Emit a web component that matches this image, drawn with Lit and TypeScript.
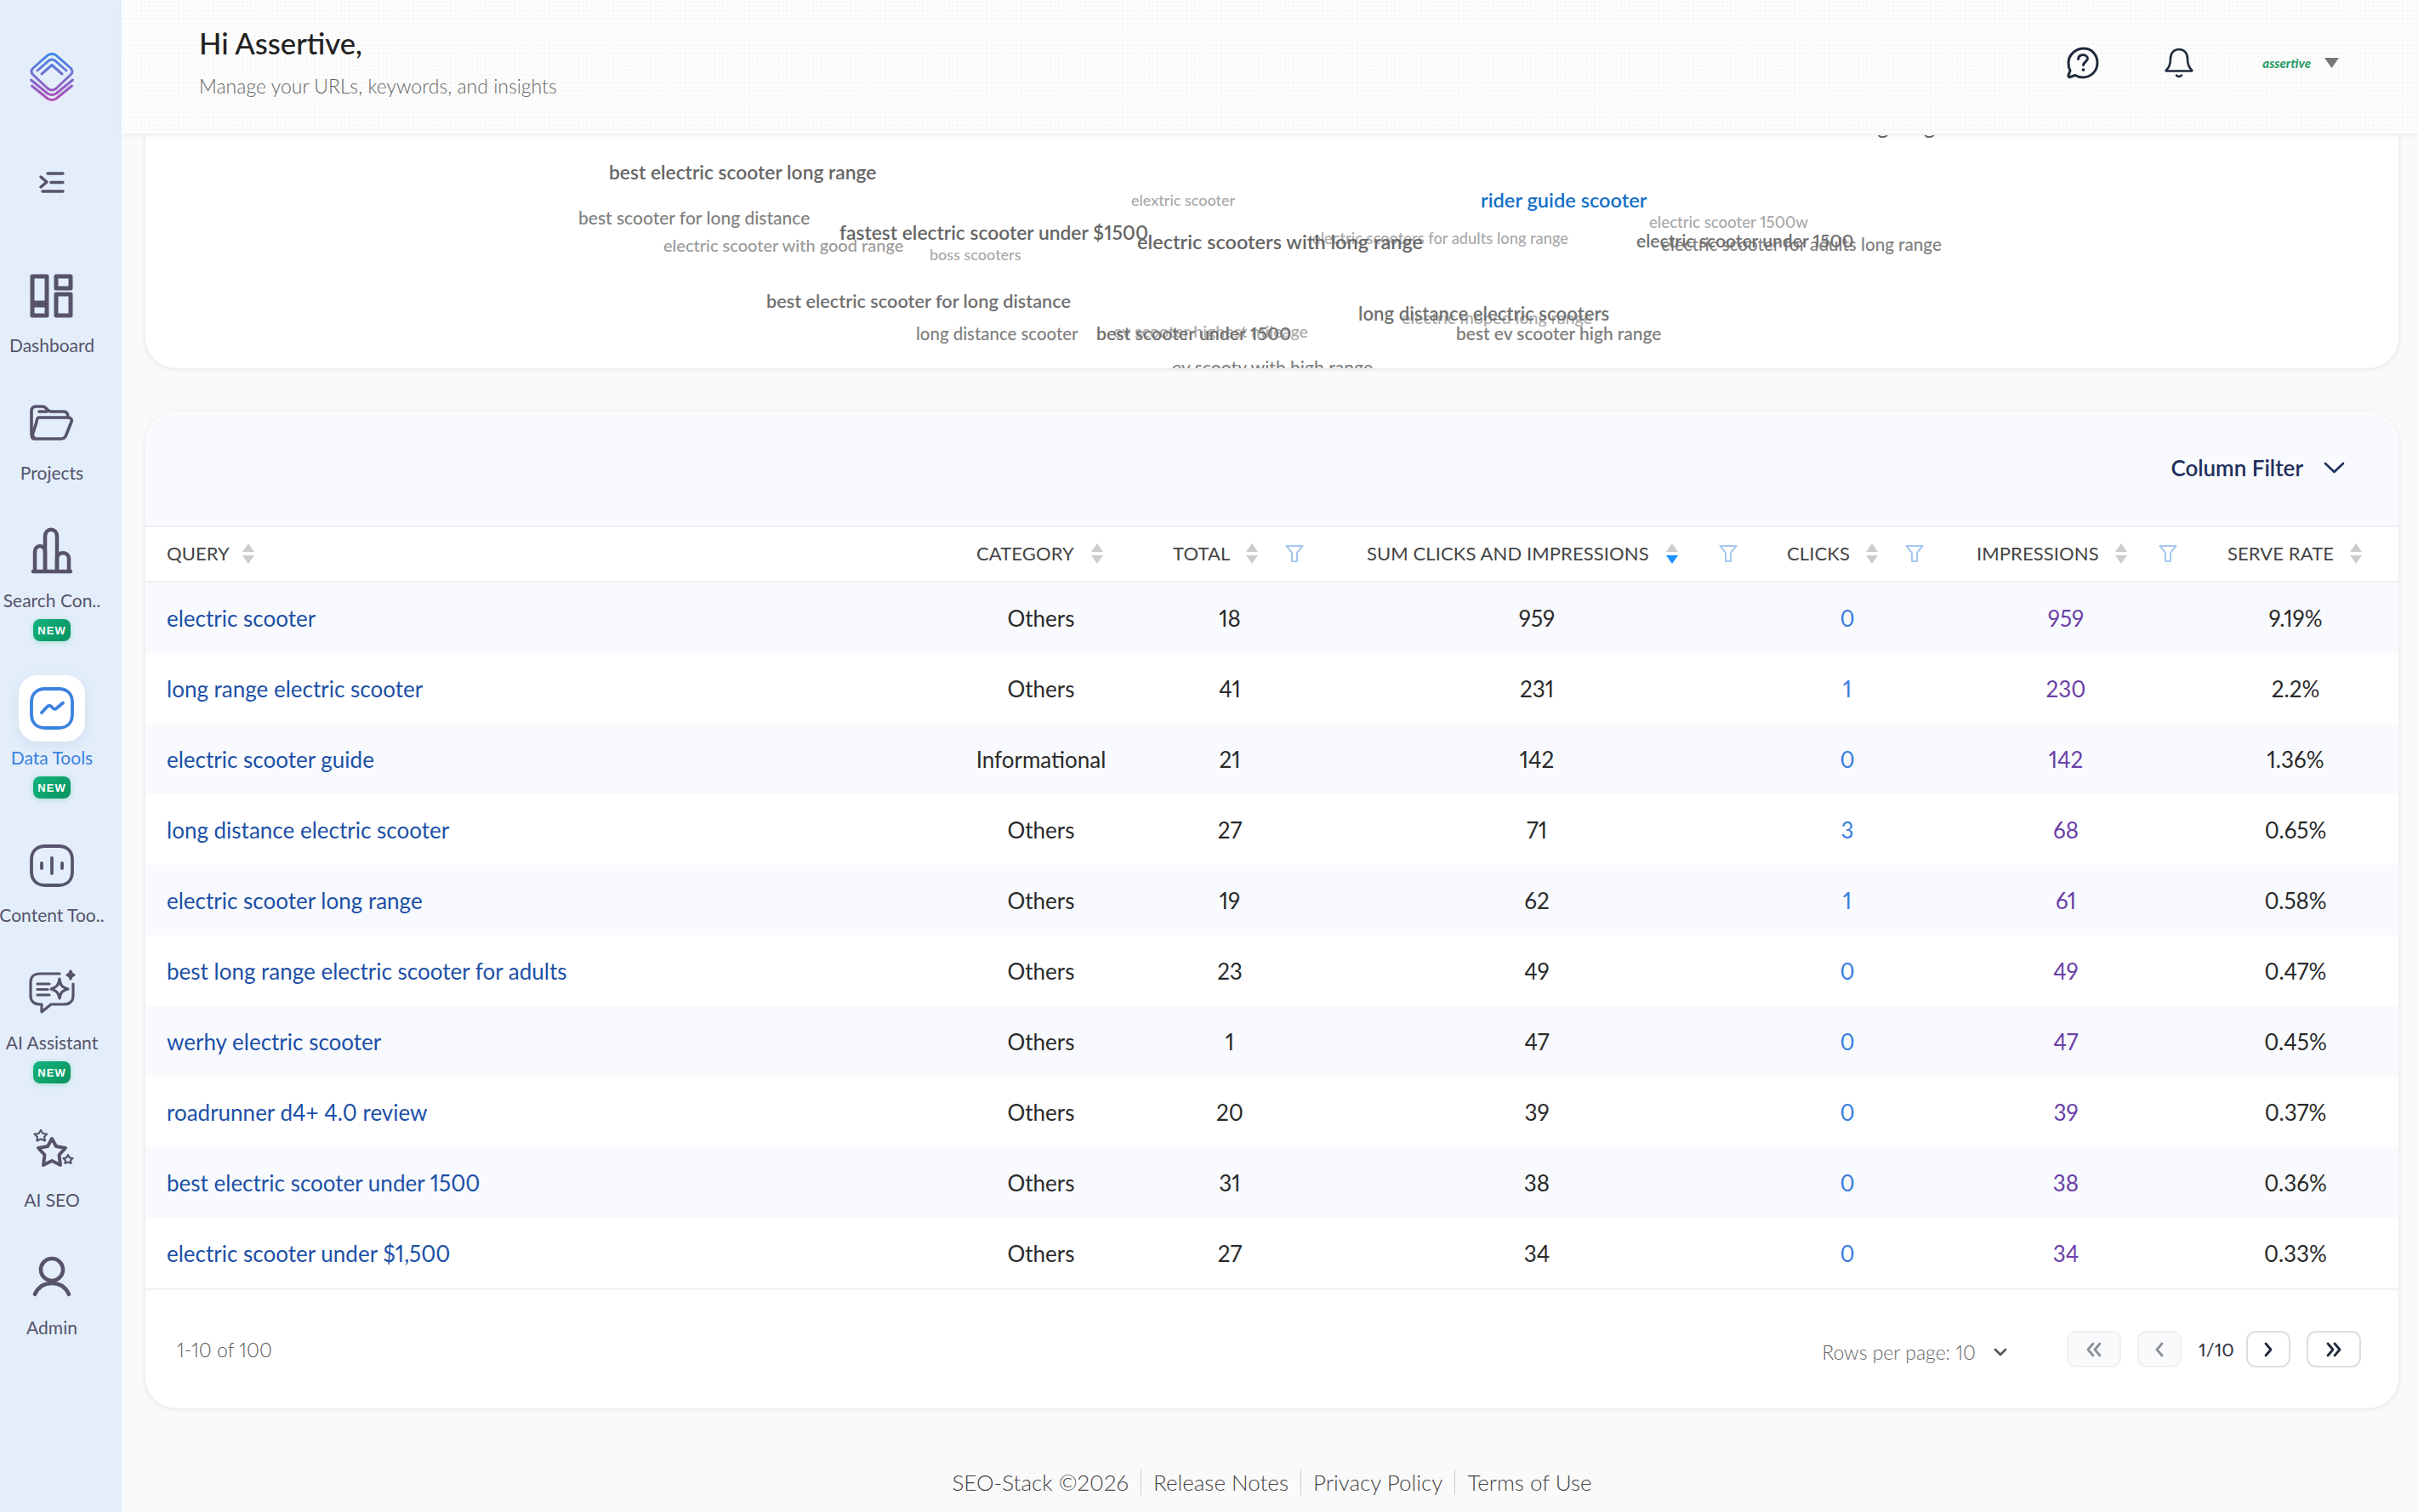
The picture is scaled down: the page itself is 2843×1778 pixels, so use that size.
import { LitElement, html, css, svg } from 'lit'
import { customElement } from 'lit/decorators.js'

const ink = '#56536b'

const navIcons: Record<string, unknown> = {
  dashboard: svg`<g fill="none" stroke=${ink} stroke-width="5" stroke-linejoin="round">
    <rect x="5" y="5" width="17" height="31"/><rect x="33" y="5" width="17" height="14"/>
    <rect x="5" y="39" width="17" height="12"/><rect x="33" y="26" width="17" height="25"/></g>`,
  projects: svg`<g fill="none" stroke=${ink} stroke-width="3.6" stroke-linecap="round" stroke-linejoin="round">
    <path d="M7 44 C5 44 4 43 4 40 V14 C4 10 6 8 9 8 H17 C20 8 21 10 23 12 C24 13 25 14 27 14 H42 C46 14 47 17 47 21"/>
    <path d="M12 21 H47 C50 21 52 23 51 26 L45 41 C44 44 42 46 39 46 H7 C5 46 4 44 5 42 L10 26 C10.500 23 11 21 12 21 Z"/>
    <path d="M13 14 H22"/></g>`,
  search: svg`<g fill="none" stroke=${ink} stroke-width="4.500" stroke-linejoin="round">
    <path d="M8 52 V29 C8 20 20 20 20 29 V52"/><path d="M20 52 V11 C20 0 34 0 34 11 V52"/>
    <path d="M34 52 V37 C34 28 48 28 48 37 V52"/><path d="M6 52 H50" stroke-linecap="round"/></g>`,
  data: svg`<g fill="none" stroke="#3b82e0" stroke-width="3.800" stroke-linecap="round" stroke-linejoin="round">
    <path d="M20 5 H36 C46 5 52 11 52 21 V35 C52 45 46 51 36 51 H20 C10 51 4 45 4 35 V21 C4 11 10 5 20 5 Z"/>
    <path d="M16 33 L22.500 26 C24 24.500 26 24.500 27.500 26 L29 27.500 C30.500 29 32.500 29 34 27.500 L41 21.500"/></g>`,
  content: svg`<g fill="none" stroke=${ink} stroke-width="3.800" stroke-linecap="round" stroke-linejoin="round">
    <path d="M20 5 H36 C46 5 52 11 52 21 V35 C52 45 46 51 36 51 H20 C10 51 4 45 4 35 V21 C4 11 10 5 20 5 Z"/>
    <path d="M16 25 V31"/><path d="M28 19 V37"/><path d="M40 25 V31"/></g>`,
  assistant: svg`<g fill="none" stroke=${ink} stroke-width="3.200" stroke-linecap="round" stroke-linejoin="round">
    <path d="M37 5 H14 C7 5 3 9 3 15 V31 C3 37 7 41 14 41 H16 V50 L27 41 H42 C49 41 53 37 53 31 V17"/>
    <path d="M11 17 H25"/><path d="M11 23.500 H23"/><path d="M11 30 H25"/>
    <path d="M37 11 C38 19 40 21 47 23 C40 25 38 27 37 34 C36 27 33 25 27 23 C33 21 36 19 37 11 Z"/>
    <path d="M50 2 C50.500 5 51.500 6 54 6.500 C51.500 7 50.500 8 50 11 C49.500 8 48.500 7 46 6.500 C48.500 6 49.500 5 50 2 Z" fill=${ink}/></g>`,
  seo: svg`<g fill="none" stroke=${ink} stroke-linecap="round" stroke-linejoin="round">
    <path stroke-width="4" d="M28 14 L33 23 L44 25 L36.500 33 L38 45 L28 40 L18 45 L19.500 33 L12 25 L23 23 Z"/>
    <path stroke-width="2.200" d="M15 4 L17.500 8 L22 8.500 L19 12 L20 16.500 L15 14.500 L10.500 16.500 L11 12 L7.500 8.500 L12.500 8 Z"/>
    <path stroke-width="2.200" d="M47 33 L49 36.500 L52.500 37 L50 39.500 L50.500 43 L47 41.500 L43.500 43 L44 39.500 L41.500 37 L45 36.500 Z"/></g>`,
  admin: svg`<g fill="none" stroke=${ink} stroke-width="4.600" stroke-linecap="round">
    <circle cx="28" cy="18" r="13"/><path d="M8 47 C12 38 19 34 28 34 C37 34 44 38 48 47"/></g>`,
}

const nav = [
  { key: 'dashboard', label: 'Dashboard' },
  { key: 'projects', label: 'Projects' },
  { key: 'search', label: 'Search Con..', isNew: true },
  { key: 'data', label: 'Data Tools', isNew: true, active: true },
  { key: 'content', label: 'Content Too..' },
  { key: 'assistant', label: 'AI Assistant', isNew: true },
  { key: 'seo', label: 'AI SEO' },
  { key: 'admin', label: 'Admin' },
]

const dark = '#666'
const mid = '#808080'
const pale = '#a8a8a8'

// free canvas: x/y are the word's left edge and vertical centre inside the card
const words = [
  { t: 'long range scooter', x: 2002, y: -11, s: 25, c: dark, w: 500 },
  { t: 'best electric scooter long range', x: 545, y: 44, s: 22.8, c: dark, w: 600 },
  { t: 'best scooter for long distance', x: 509, y: 97, s: 21, c: mid, w: 500 },
  { t: 'elextric scooter', x: 1159, y: 77, s: 18, c: pale, w: 500 },
  { t: 'rider guide scooter', x: 1570, y: 76, s: 23.6, c: '#1470c8', w: 600 },
  { t: 'electric scooter 1500w', x: 1768, y: 102, s: 18.6, c: pale, w: 500 },
  { t: 'electric scooter with good range', x: 609, y: 129, s: 20, c: '#999', w: 500 },
  { t: 'fastest electric scooter under $1500', x: 816, y: 115, s: 22.8, c: dark, w: 600 },
  { t: 'boss scooters', x: 922, y: 141, s: 18, c: pale, w: 500 },
  { t: 'electric scooters for adults long range', x: 1372, y: 122, s: 18.3, c: pale, w: 500 },
  { t: 'electric scooters with long range', x: 1166, y: 125, s: 23.5, c: dark, w: 600 },
  { t: 'electric scooter for adults long range', x: 1782, y: 128, s: 20.6, c: mid, w: 500 },
  { t: 'electric scooter under 1500', x: 1753, y: 124, s: 21.1, c: '#707070', w: 600 },
  { t: 'best electric scooter for long distance', x: 730, y: 195, s: 21.7, c: '#707070', w: 600 },
  { t: 'electric moped long range', x: 1477, y: 215, s: 19.7, c: pale, w: 500 },
  { t: 'long distance electric scooters', x: 1426, y: 210, s: 22.2, c: '#707070', w: 600 },
  { t: 'long distance scooter', x: 906, y: 233, s: 20.4, c: mid, w: 500 },
  { t: 'ev scooter highest mileage', x: 1138, y: 231, s: 19.7, c: pale, w: 500 },
  { t: 'best scooter under 1500', x: 1118, y: 234, s: 21.3, c: '#707070', w: 600 },
  { t: 'best ev scooter high range', x: 1541, y: 233, s: 20.9, c: mid, w: 600 },
  { t: 'ev scooty with high range', x: 1207, y: 273, s: 21.1, c: mid, w: 500 },
]

const columns = [
  { label: 'QUERY', cls: 'c-query' },
  { label: 'CATEGORY', cls: 'c-category' },
  { label: 'TOTAL', cls: 'c-total', filter: true },
  { label: 'SUM CLICKS AND IMPRESSIONS', cls: 'c-sum', filter: true, sorted: true },
  { label: 'CLICKS', cls: 'c-clicks', filter: true },
  { label: 'IMPRESSIONS', cls: 'c-impressions', filter: true },
  { label: 'SERVE RATE', cls: 'c-rate' },
]

const rows = [
  ['electric scooter', 'Others', 18, 959, 0, 959, '9.19%'],
  ['long range electric scooter', 'Others', 41, 231, 1, 230, '2.2%'],
  ['electric scooter guide', 'Informational', 21, 142, 0, 142, '1.36%'],
  ['long distance electric scooter', 'Others', 27, 71, 3, 68, '0.65%'],
  ['electric scooter long range', 'Others', 19, 62, 1, 61, '0.58%'],
  ['best long range electric scooter for adults', 'Others', 23, 49, 0, 49, '0.47%'],
  ['werhy electric scooter', 'Others', 1, 47, 0, 47, '0.45%'],
  ['roadrunner d4+ 4.0 review', 'Others', 20, 39, 0, 39, '0.37%'],
  ['best electric scooter under 1500', 'Others', 31, 38, 0, 38, '0.36%'],
  ['electric scooter under $1,500', 'Others', 27, 34, 0, 34, '0.33%'],
]

const chevron = (d: string, color: string) => html`<svg class="pg-icon" viewBox="0 0 24 24" fill="none" stroke=${color} stroke-width="2.800" stroke-linecap="round" stroke-linejoin="round"><path d=${d}/></svg>`

@customElement('app-root')
export class AppRoot extends LitElement {
  static styles = css`
    :host {
      display: flex;
      min-height: 100vh;
      background: #fafafa;
      font-family: 'Lato', 'Noto Sans', sans-serif;
      font-variant-numeric: proportional-nums;
      color: #222;
      overflow: hidden;
    }

    .sidebar {
      width: 143px;
      flex: none;
      background: #e3eefa;
      display: flex;
      flex-direction: column;
      align-items: center;
      padding: 62px 21px 0 0;
      box-sizing: border-box;
    }
    .logo { width: 52px; height: 58px; display: block; }
    .menu { width: 30px; height: 25px; margin: 82px 0 82px; display: block; }
    .nav { display: flex; flex-direction: column; gap: 37px; width: 100%; align-items: center; }
    .nav-item { display: flex; flex-direction: column; align-items: center; width: 100%; }
    .nav-icon { width: 78px; height: 78px; border-radius: 22px; display: flex; align-items: center; justify-content: center; }
    .nav-icon svg { width: 56px; height: 56px; display: block; }
    .nav-item.active .nav-icon { background: #fff; box-shadow: 0 4px 14px rgba(120, 150, 190, 0.18); }
    .nav-label { margin: 4px 0 1px; font-size: 21px; line-height: 30px; color: #56536b; white-space: nowrap; }
    .nav-item.active .nav-label { color: #3b82e0; }
    .badge {
      margin: 6px 0 3px;
      width: 44px;
      height: 26px;
      border-radius: 8px;
      background: linear-gradient(135deg, #14b57c, #0a9160);
      box-shadow: 0 1px 6px rgba(20, 180, 120, 0.3);
      color: #fff;
      font-size: 13px;
      font-weight: 900;
      letter-spacing: 1px;
      display: flex;
      align-items: center;
      justify-content: center;
      font-family: 'Liberation Sans', sans-serif;
    }

    .main { flex: 1; min-width: 0; display: flex; flex-direction: column; }

    .topbar {
      height: 159px;
      box-sizing: border-box;
      padding: 0 93px 0 91px;
      display: flex;
      align-items: center;
      justify-content: space-between;
      background-color: #fdfdfd;
      background-image: radial-gradient(#f6f6f6 1px, transparent 1.2px);
      background-size: 5px 5px;
      border-bottom: 1px solid #ececec;
      box-shadow: 0 2px 6px rgba(0, 0, 0, 0.03);
      position: relative;
      z-index: 2;
    }
    .greet { margin-top: -12px; }
    .hello { font-size: 34.6px; line-height: 42px; font-weight: 500; color: #222; margin: 0 0 13px; }
    .sub { font-size: 23px; line-height: 32px; font-weight: 300; color: #666; margin: 0; }
    .top-actions { display: flex; align-items: center; margin-top: -11px; }
    .top-actions svg { display: block; }
    .help { width: 38px; height: 38px; margin-right: 77px; }
    .bell { width: 34px; height: 36px; margin-right: 81px; }
    .user { font-size: 15px; font-weight: 900; font-style: italic; color: #2e9e6b; }
    .caret { width: 17px; height: 12px; margin-left: 16px; }

    .content { padding: 0 23px 0 28px; display: flex; flex-direction: column; }
    .card { background: #fff; box-shadow: 0 1px 6px rgba(0, 0, 0, 0.09); }

    .cloud {
      height: 274px;
      position: relative;
      overflow: hidden;
      border-radius: 0 0 36px 36px;
    }
    .word { position: absolute; transform: translateY(-50%); white-space: nowrap; line-height: 1.2; }

    .table-card { margin-top: 51px; border-radius: 36px; overflow: hidden; }
    .toolbar {
      height: 134px;
      background: #f8fafd;
      display: flex;
      align-items: center;
      justify-content: flex-end;
      padding: 0 63px 2px 0;
      gap: 24px;
      box-sizing: border-box;
      color: #1f2f5c;
      font-size: 26px;
      font-weight: 600;
    }
    .toolbar svg { width: 25px; height: 14px; display: block; }

    table { width: 100%; border-collapse: separate; border-spacing: 0; table-layout: fixed; }
    th {
      box-sizing: border-box;
      height: 67px;
      padding: 0;
      border-top: 2px solid #eef0f3;
      border-bottom: 2px solid #eef0f3;
      background: #fff;
    }
    .th-in { display: flex; align-items: center; font-size: 22px; font-weight: 400; letter-spacing: 0.1px; color: #444; white-space: nowrap; text-align: left; margin-top: -2px; }
    .th-label { width: var(--label); }
    .sort { width: 14px; height: 26px; margin-left: 18px; display: block; flex: none; }
    .filter { width: 22px; height: 22px; margin-left: var(--gap); display: block; flex: none; }
    .c-query { width: 949px; --pad: 25px; --label: 71px; }
    .c-category { width: 208px; --pad: 28px; --label: 117px; }
    .c-total { width: 236px; --pad: 51px; --label: 68px; --gap: 32px; }
    .c-sum { width: 486px; --pad: 43px; --label: 334px; --gap: 48px; }
    .c-clicks { width: 244px; --pad: 51px; --label: 75px; --gap: 32px; }
    .c-impressions { width: 270px; --pad: 30px; --label: 145px; --gap: 37px; }
    .c-rate { width: 256px; --pad: 55px; --label: 126px; }
    th .th-in { padding-left: var(--pad); }

    td { height: 83px; padding: 0; text-align: center; font-size: 26px; font-weight: 400; color: #2a2a2a; }
    tbody tr:nth-child(odd) td { background: #f8fafd; }
    td:first-child { text-align: left; padding-left: 25px; color: #1c50a6; }
    td:last-child { padding-right: 0; padding-left: 14px; }
    td.clicks { color: #3b7de0; }
    td.impr { color: #6b3fa8; }

    .pager {
      height: 141px;
      box-sizing: border-box;
      border-top: 2px solid #eef0f3;
      display: flex;
      align-items: center;
      padding: 0 44px 0 37px;
    }
    .count { font-size: 23px; font-weight: 300; color: #555; margin-right: auto; }
    .rows { font-size: 23px; font-weight: 300; color: #666; display: flex; align-items: center; gap: 21px; margin: 6px 70px 0 0; }
    .rows svg { width: 16px; height: 16px; display: block; }
    .pg-btn {
      height: 43px;
      width: 52px;
      box-sizing: border-box;
      border: 2px solid #dedede;
      border-radius: 11px;
      background: #fff;
      display: flex;
      align-items: center;
      justify-content: center;
      margin-left: 19px;
      padding: 0;
    }
    .pg-btn.wide { width: 64px; }
    .pg-btn.off { background: #f9fafc; border-color: #eef0f3; }
    .pg-btn.wide.off { margin-left: 0; }
    .pg-icon { width: 24px; height: 24px; display: block; }
    .page-no { font-size: 22px; color: #334; margin-left: 20px; width: 37px; text-align: center; white-space: nowrap; }

    .footer { margin-top: 72px; display: flex; justify-content: center; align-items: center; font-size: 26px; line-height: 30px; font-weight: 300; color: #444; }
    .footer span { padding: 0 14px; border-left: 1px solid #ccc; }
    .footer span:first-child { border-left: 0; }
  `

  private sortIcon(active: boolean) {
    return html`<svg class="sort" viewBox="0 0 14 26">
      <path d="M7 1 L14 11 H0 Z" fill="#cccccc"/>
      <path d="M7 25 L14 15 H0 Z" fill=${active ? '#1890ff' : '#cccccc'}/>
    </svg>`
  }

  render() {
    return html`
      <aside class="sidebar">
        <svg class="logo" viewBox="0 0 52 58" fill="none" stroke="url(#lg)" stroke-width="3" stroke-linecap="round" stroke-linejoin="round">
          <defs><linearGradient id="lg" gradientUnits="userSpaceOnUse" x1="0" y1="0" x2="0" y2="58"><stop offset="0" stop-color="#3a8ae8"/><stop offset="1" stop-color="#bb4db5"/></linearGradient></defs>
          <path d="M21 3 Q26 0 31 3 L48 18 Q52 22 48 26 L31 42 Q26 46 21 42 L4 26 Q0 22 4 18 Z"/>
          <path d="M9 21 L22 9.500 Q26 6.500 30 9.500 L43 21"/>
          <path d="M14 25 L26 14.500 L38 25"/>
          <path d="M1.500 32 L21 48 Q26 51 31 48 L50.500 32"/>
          <path d="M2.500 39 L21 54 Q26 57 31 54 L49.500 39"/>
        </svg>
        <svg class="menu" viewBox="0 0 30 25" fill="none" stroke=${ink} stroke-width="3.400" stroke-linecap="round" stroke-linejoin="round">
          <path d="M10 2 H28"/><path d="M14 12.500 H28"/><path d="M4 23 H28"/><path d="M2 6 L9 12 L2 18"/>
        </svg>
        <nav class="nav">
          ${nav.map(n => html`
            <div class="nav-item ${n.active ? 'active' : ''}">
              <div class="nav-icon"><svg viewBox="0 0 56 56">${navIcons[n.key]}</svg></div>
              <div class="nav-label">${n.label}</div>
              ${n.isNew ? html`<div class="badge">NEW</div>` : ''}
            </div>`)}
        </nav>
      </aside>

      <div class="main">
        <header class="topbar">
          <div class="greet">
            <h1 class="hello">Hi Assertive,</h1>
            <p class="sub">Manage your URLs, keywords, and insights</p>
          </div>
          <div class="top-actions">
            <svg class="help" viewBox="0 0 38 38" fill="none" stroke="#1f2a3c" stroke-width="3" stroke-linecap="round" stroke-linejoin="round">
              <path d="M20 2 C29.500 2 36 9.500 36 19 C36 28.500 28.500 36 19 36 C15.500 36 12.500 35 10 33.500 L4 35.500 C2.500 36 1.500 35 2 33.500 L4 28 C2.500 25.500 2 22.500 2 19 C2 9.500 10.500 2 20 2 Z"/>
              <path d="M13.500 14.500 C14 11 16.500 9.500 19 9.500 C22 9.500 24.500 11.500 24.500 14 C24.500 17.500 19.500 18 19.500 21.500"/>
              <path d="M19.500 27 V27.200" stroke-width="3.600"/>
            </svg>
            <svg class="bell" viewBox="0 0 34 36" fill="none" stroke="#1f2a3c" stroke-width="2.600" stroke-linecap="round" stroke-linejoin="round">
              <path d="M17 2 C10.500 2 7 7 7 13 C7 20 5.500 23 2.500 26 C1 27.500 2 27.500 3 27.500 H31 C32 27.500 33 27.500 31.500 26 C28.500 23 27 20 27 13 C27 7 23.500 2 17 2 Z"/>
              <path d="M14 32.500 C15.500 34.500 18.500 34.500 20 32.500"/>
            </svg>
            <span class="user">assertive</span>
            <svg class="caret" viewBox="0 0 17 12"><path d="M0 0 H17 L8.500 12 Z" fill="#777"/></svg>
          </div>
        </header>

        <div class="content">
          <section class="card cloud">
            ${words.map(w => html`<span class="word" style="left:${w.x}px;top:${w.y}px;font-size:${w.s}px;color:${w.c};font-weight:${w.w}">${w.t}</span>`)}
          </section>

          <section class="card table-card">
            <div class="toolbar">
              <span>Column Filter</span>
              <svg viewBox="0 0 25 14" fill="none" stroke="#1f2f5c" stroke-width="2.600" stroke-linecap="round" stroke-linejoin="round"><path d="M2 2 L12.500 12 L23 2"/></svg>
            </div>
            <table>
              <thead>
                <tr>
                  ${columns.map(c => html`
                    <th class=${c.cls}>
                      <div class="th-in">
                        <span class="th-label">${c.label}</span>
                        ${this.sortIcon(!!c.sorted)}
                        ${c.filter ? html`<svg class="filter" viewBox="0 0 22 22" fill="none" stroke="#a6c8f0" stroke-width="2" stroke-linejoin="round"><path d="M1.500 2 H20.500 L14 10 V20 H8 V10 Z"/></svg>` : ''}
                      </div>
                    </th>`)}
                </tr>
              </thead>
              <tbody>
                ${rows.map(r => html`
                  <tr>
                    <td>${r[0]}</td><td>${r[1]}</td><td>${r[2]}</td><td>${r[3]}</td>
                    <td class="clicks">${r[4]}</td><td class="impr">${r[5]}</td><td>${r[6]}</td>
                  </tr>`)}
              </tbody>
            </table>
            <div class="pager">
              <span class="count">1-10 of 100</span>
              <span class="rows">Rows per page: 10
                <svg viewBox="0 0 16 16" fill="none" stroke="#555" stroke-width="2.600" stroke-linecap="round" stroke-linejoin="round"><path d="M2 5 L8 11 L14 5"/></svg>
              </span>
              <button class="pg-btn wide off">${chevron('M11 5 L5 12 L11 19 M19 5 L13 12 L19 19', '#8a8f98')}</button>
              <button class="pg-btn off">${chevron('M15 5 L9 12 L15 19', '#8a8f98')}</button>
              <span class="page-no">1/10</span>
              <button class="pg-btn">${chevron('M9 5 L15 12 L9 19', '#1f2a3c')}</button>
              <button class="pg-btn wide">${chevron('M5 5 L11 12 L5 19 M13 5 L19 12 L13 19', '#1f2a3c')}</button>
            </div>
          </section>

          <footer class="footer">
            <span>SEO-Stack ©2026</span><span>Release Notes</span><span>Privacy Policy</span><span>Terms of Use</span>
          </footer>
        </div>
      </div>
    `
  }
}
